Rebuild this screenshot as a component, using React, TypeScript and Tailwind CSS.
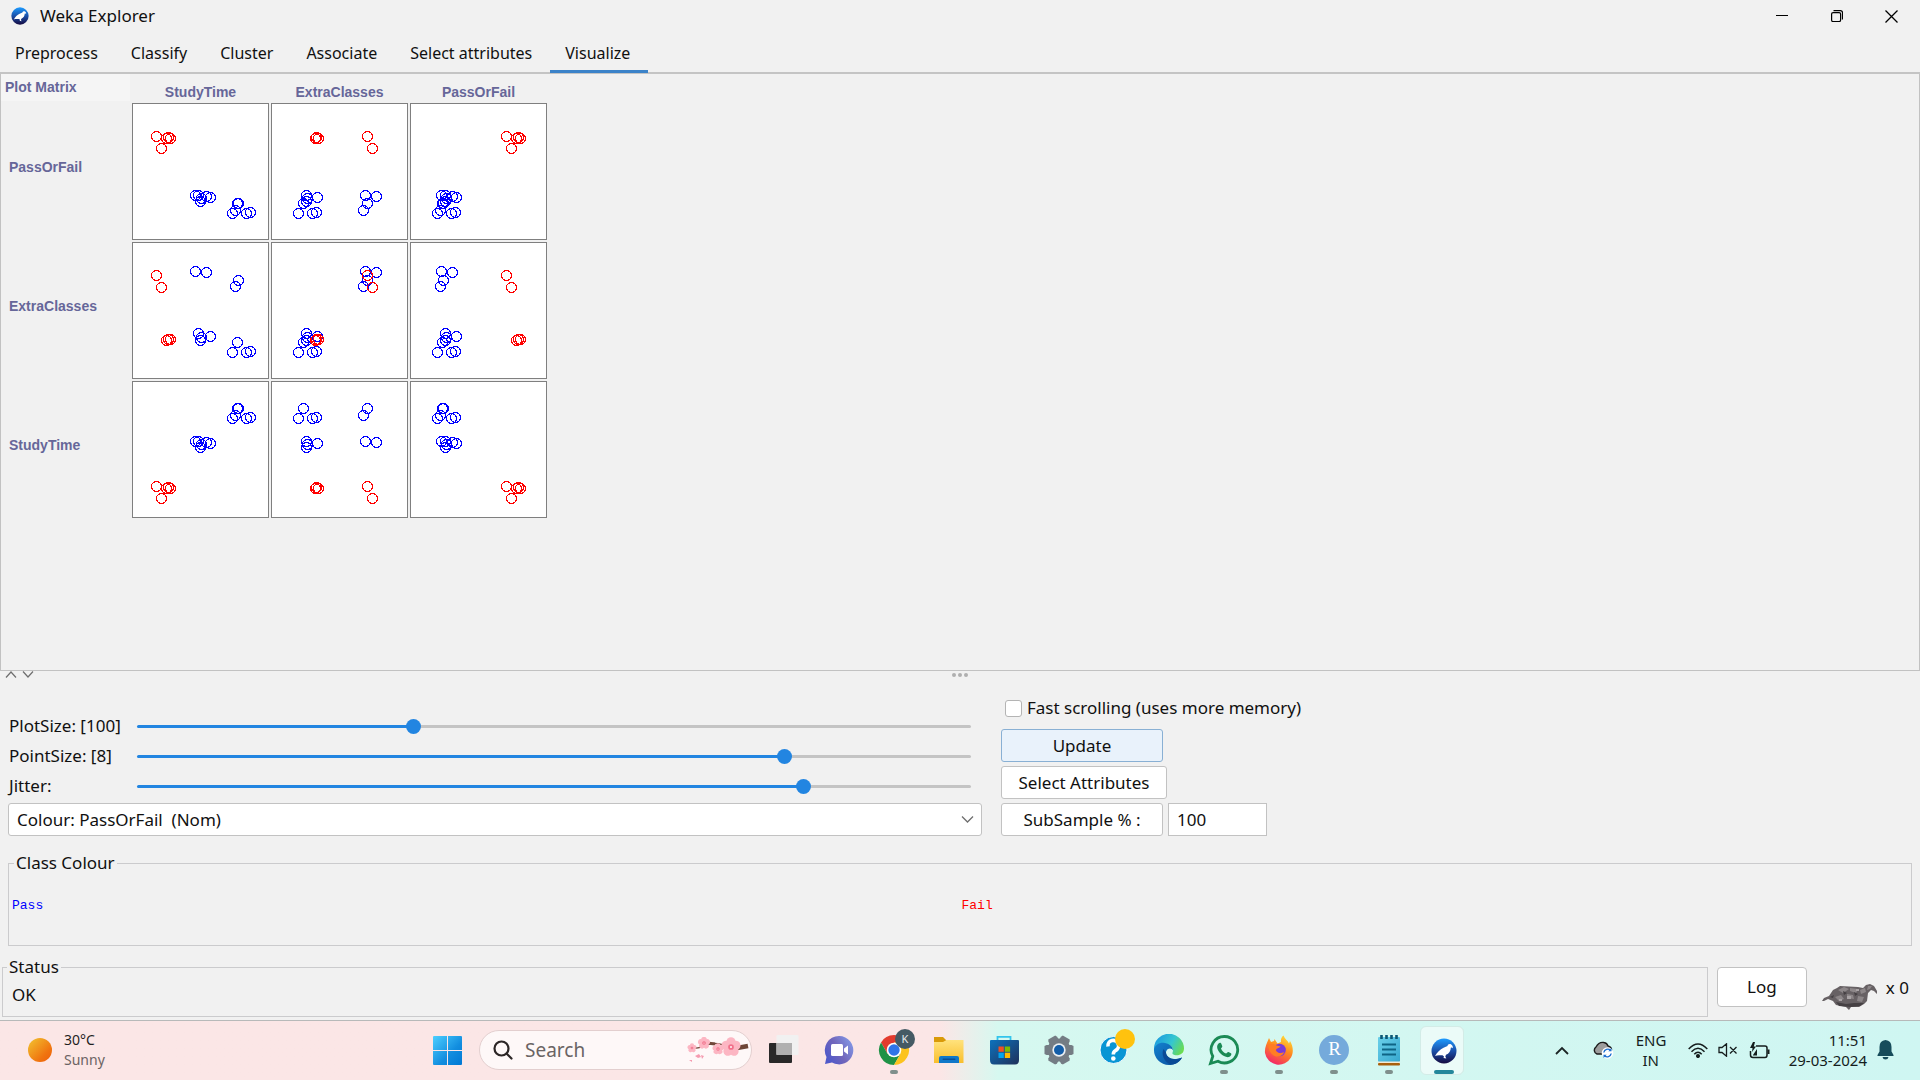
import React, { useId, useState } from "react";

type Point = { x: number[]; y: number[]; pass: boolean };

/* x: StudyTime, ExtraClasses, PassOrFail columns; y: PassOrFail, ExtraClasses, StudyTime rows */
const POINTS: Point[] = [
  { x: [63, 94, 31], y: [92, 29, 60], pass: true },
  { x: [66, 35, 35], y: [92, 91, 60], pass: true },
  { x: [69, 36, 36], y: [95, 95, 63], pass: true },
  { x: [68, 35, 35], y: [98, 98, 66], pass: true },
  { x: [74, 105, 42], y: [93, 30, 61], pass: true },
  { x: [78, 46, 46], y: [94, 94, 62], pass: true },
  { x: [105, 32, 32], y: [100, 100, 27], pass: true },
  { x: [106, 96, 33], y: [100, 38, 27], pass: true },
  { x: [103, 92, 30], y: [107, 44, 34], pass: true },
  { x: [100, 27, 27], y: [110, 110, 37], pass: true },
  { x: [114, 41, 41], y: [110, 110, 37], pass: true },
  { x: [118, 45, 45], y: [109, 109, 36], pass: true },
  { x: [24, 96, 96], y: [33, 33, 105], pass: false },
  { x: [29, 101, 101], y: [45, 45, 117], pass: false },
  { x: [34, 44, 106], y: [35, 98, 107], pass: false },
  { x: [36, 45, 108], y: [34, 97, 106], pass: false },
  { x: [38, 47, 110], y: [35, 97, 107], pass: false },
];

const COLUMNS = ["StudyTime", "ExtraClasses", "PassOrFail"];
const ROWS = ["PassOrFail", "ExtraClasses", "StudyTime"];
const TABS = ["Preprocess", "Classify", "Cluster", "Associate", "Select attributes", "Visualize"];

function WekaLogo({ size }: { size: number }) {
  const id = useId();
  return (
    <svg width={size} height={size} viewBox="0 0 26 26" aria-hidden="true">
      <defs>
        <linearGradient id={id} x1="0" y1="0" x2="0" y2="1">
          <stop offset="0" stopColor="#1c9bff" />
          <stop offset="0.5" stopColor="#1a4fa8" />
          <stop offset="1" stopColor="#150a40" />
        </linearGradient>
      </defs>
      <circle cx="13" cy="13" r="12.5" fill={`url(#${id})`} />
      <path
        d="M4 18C6 14.500 9 11.500 12.500 9.800L16.500 8C16.500 6.500 18.500 5.500 20.200 6.500C21.500 7.200 22 8.600 21.800 10.200C21 9.400 20.300 9.400 19.800 9.800C19.800 13 18 15.800 15 16.800L14.300 18.500L15.300 20.500L12.500 20L13 18.500L11.500 17.200C9 17.500 6.500 16.800 4 18Z"
        fill="#fff"
      />
    </svg>
  );
}

function Plot({ col, row }: { col: number; row: number }) {
  return (
    <button
      type="button"
      aria-label={`${ROWS[row]} against ${COLUMNS[col]}`}
      className="block h-[137px] w-[137px] border border-[#7f7f7f] bg-white"
    >
      <svg width="135" height="135" viewBox="1 1 135 135" shapeRendering="crispEdges" aria-hidden="true">
        {POINTS.map((p, i) => (
          <circle
            key={i}
            cx={p.x[col] + 0.5}
            cy={p.y[row] + 0.5}
            r="5"
            fill="none"
            stroke={p.pass ? "#0000ff" : "#ff0000"}
          />
        ))}
      </svg>
    </button>
  );
}

function PlotMatrix() {
  return (
    <section className="flex-1 border border-t-0 border-[#c2c2c2] text-sm leading-4 font-bold text-[#666699]" style={{ fontFamily: '"Liberation Sans", Arial, sans-serif' }}>
      <div className="grid w-max grid-cols-[129px_137px_137px_137px] gap-x-0.5">
        <h2 className="h-[27px] bg-[#f5f5f5] pt-[5px] pl-1">Plot Matrix</h2>
        {COLUMNS.map((c) => (
          <div key={c} className="pt-[10px] text-center">
            {c}
          </div>
        ))}
      </div>
      <div className="mt-0.5 grid w-max grid-cols-[129px_137px_137px_137px] gap-0.5">
        {ROWS.map((name, r) => (
          <React.Fragment key={name}>
            <div className="flex items-center pb-2.5 pl-2">{name}</div>
            {COLUMNS.map((c, i) => (
              <Plot key={c} col={i} row={r} />
            ))}
          </React.Fragment>
        ))}
      </div>
    </section>
  );
}

function Slider({ label, initial }: { label: string; initial: number }) {
  const id = useId();
  const [value, setValue] = useState(initial);
  const pct = value / 10;
  return (
    <div className="flex h-[30px] items-center pr-[11px] pl-px">
      <label htmlFor={id} className="w-[128px] shrink-0">
        {label}
      </label>
      <input
        id={id}
        type="range"
        min={0}
        max={1000}
        value={value}
        onChange={(e) => setValue(Number(e.target.value))}
        className="h-[3px] min-w-0 flex-1 appearance-none rounded-full [&::-webkit-slider-thumb]:h-[15px] [&::-webkit-slider-thumb]:w-[15px] [&::-webkit-slider-thumb]:appearance-none [&::-webkit-slider-thumb]:rounded-full [&::-webkit-slider-thumb]:bg-[#2285e1]"
        style={{ background: `linear-gradient(to right, #2285e1 ${pct}%, #c4c4c4 ${pct}%)` }}
      />
    </div>
  );
}

const BTN = "h-[33px] rounded-[3px] border border-[#c2c2c2] bg-white";

function Controls() {
  return (
    <section className="flex items-end pl-2">
      <div className="w-[974px]">
        <Slider label="PlotSize: [100]" initial={329} />
        <Slider label="PointSize: [8]" initial={782} />
        <Slider label="Jitter:" initial={805} />
        <div className="relative mt-0.5">
          <select aria-label="Colour" className="block h-[33px] w-full appearance-none rounded-[3px] border border-[#c2c2c2] bg-white pl-2">
            <option>Colour: PassOrFail&nbsp; (Nom)</option>
          </select>
          <svg className="pointer-events-none absolute top-3 right-2" width="13" height="9" viewBox="0 0 13 9" fill="none" stroke="#6e6e6e" strokeWidth="1.3">
            <path d="M1 1.500L6.500 7L12 1.500" />
          </svg>
        </div>
      </div>
      <div className="ml-[19px] flex flex-col items-start gap-1">
        <label className="mb-0.5 ml-1 flex h-[30px] items-center gap-[5px]">
          <input type="checkbox" className="h-[17px] w-[17px] appearance-none rounded-[3px] border border-[#b4b4b4] bg-white checked:bg-[#2285e1]" />
          Fast scrolling (uses more memory)
        </label>
        <button type="button" className="h-[33px] w-[162px] rounded-[3px] border border-[#89b0d4] bg-[#e9f2fb]">
          Update
        </button>
        <button type="button" className={`${BTN} w-[166px]`}>
          Select Attributes
        </button>
        <div className="flex gap-[5px]">
          <button type="button" className={`${BTN} w-[162px]`}>
            SubSample % :
          </button>
          <input aria-label="SubSample percentage" defaultValue="100" className="h-[33px] w-[99px] border border-[#c2c2c2] bg-white px-2" />
        </div>
      </div>
    </section>
  );
}

function RestingBird() {
  return (
    <svg width="56" height="26" viewBox="0 0 56 26" aria-hidden="true">
      <path d="M0 17L2 14L7 12L11 6L15 4L18 2L36 3L41 4L44 1L48 0L52 2L55 7L55 10L52 7L49 6L46 9L45 17L42 20L37 23L29 23L27 26L24 23L14 21L11 17L6 15L2 17Z" fill="#676164" />
      <path d="M16 6l6-3 5 2-6 4zM28 4l8 1-2 4-6-2zM38 6l5-2 1 4-5 2zM46 2l4 0-2 3-3 1z" fill="#8d8789" />
      <path d="M13 13l6-2 3 4-5 2zM25 10l6 1 1 4-7-1zM36 12l6 1-2 5-5-1z" fill="#8c8688" />
      <path d="M14 18l10 2 8-1 10 0-4 3-9 1-12-1zM21 7l4 2-3 2zM32 8l4 2-3 2zM8 13l4-2-1 3z" fill="#454043" />
      <path d="M25 12h4v3h-4zM34 5h3v2h-3zM17 15h3v2h-3z" fill="#a9a3a5" />
    </svg>
  );
}

function StatusRow() {
  return (
    <section className="mt-[11px] mb-[3px] flex items-start pl-0.5">
      <fieldset className="h-[60px] min-w-0 flex-1 border border-[#cbcbcd] pl-[9px]">
        <legend className="-ml-[5px] h-5 px-0.5 leading-5">Status</legend>
        <p className="pt-2 leading-5">OK</p>
      </fieldset>
      <button type="button" className="mt-[10px] ml-[9px] h-10 w-[90px] rounded-[4px] border border-[#c2c2c2] bg-white">
        Log
      </button>
      <div className="mt-[27px] ml-[15px]">
        <RestingBird />
      </div>
      <span className="mt-[21px] mr-[11px] ml-2 leading-5">x 0</span>
    </section>
  );
}

function Blossom({ x, y, r }: { x: number; y: number; r: number }) {
  return (
    <g transform={`translate(${x} ${y})`}>
      {[0, 72, 144, 216, 288].map((a) => (
        <circle key={a} cx="0" cy={-r * 0.55} r={r * 0.48} fill="#fcb6c3" transform={`rotate(${a})`} />
      ))}
      <circle r={r * 0.3} fill="#f2708a" />
      <circle r={r * 0.1} fill="#fff" />
    </g>
  );
}

const TaskIcons: { name: string; running?: boolean; art: React.ReactNode }[] = [
  {
    name: "Task view",
    art: (
      <svg width="30" height="30" viewBox="0 0 30 30">
        <rect x="0" y="8" width="23" height="20" rx="1" fill="#292929" />
        <rect x="7.500" y="0" width="22" height="20" rx="1" fill="#f1f1f1" />
        <path d="M7.500 8H23V20H7.500Z" fill="#b0b0b0" />
      </svg>
    ),
  },
  {
    name: "Chat",
    art: (
      <svg width="30" height="30" viewBox="0 0 30 30">
        <defs>
          <linearGradient id="chat" x1="0" y1="0.6" x2="1" y2="0">
            <stop offset="0" stopColor="#5059c9" />
            <stop offset="0.4" stopColor="#7166bb" />
            <stop offset="1" stopColor="#86a3f0" />
          </linearGradient>
        </defs>
        <path d="M15 1A14.200 14.200 0 1 1 8 27.500L1 29L2.500 22A14.200 14.200 0 0 1 15 1Z" fill="url(#chat)" />
        <rect x="7" y="9" width="12" height="12" rx="1.500" fill="#fff" />
        <path d="M20 13.500L24 10.500V19.500L20 16.500Z" fill="#fff" />
      </svg>
    ),
  },
  {
    name: "Chrome",
    running: true,
    art: (
      <svg className="overflow-visible" width="30" height="30" viewBox="0 0 30 30">
        <path d="M15 15L2 7.500A15 15 0 0 1 28 7.500L15 7.500Z" fill="#e33b2e" />
        <path d="M2 7.500L8.500 18.700L15 15L15 7.500Z" fill="#e33b2e" />
        <path d="M2 7.500A15 15 0 0 0 15 30L21.500 18.700H8.500Z" fill="#1f9246" />
        <path d="M28 7.500H15V15L21.500 18.700L15 30A15 15 0 0 0 28 7.500Z" fill="#fcc31e" />
        <circle cx="15" cy="15" r="7.300" fill="#fff" />
        <circle cx="15" cy="15" r="5.700" fill="#2f74e8" />
        <circle cx="26" cy="4" r="10" fill="#455a64" />
        <text x="26" y="8" fontSize="11" fill="#e8edef" textAnchor="middle" fontFamily="Noto Sans">
          K
        </text>
      </svg>
    ),
  },
  {
    name: "File Explorer",
    art: (
      <svg width="31" height="28" viewBox="0 0 31 28">
        <defs>
          <linearGradient id="folder" x1="0" y1="0" x2="0" y2="1">
            <stop offset="0" stopColor="#ffe27c" />
            <stop offset="1" stopColor="#f9bf2d" />
          </linearGradient>
        </defs>
        <path d="M1 1H10L13.500 4.500V9H1Z" fill="#d99a08" />
        <path d="M1 6H10L13.500 4H30.500V27H1Z" fill="url(#folder)" />
        <path d="M6 27V22A2 2 0 0 1 8 20H24A2 2 0 0 1 26 22V27Z" fill="#0f78c9" />
        <rect x="9.500" y="22.500" width="13" height="1.500" rx="0.700" fill="#0a4f96" />
      </svg>
    ),
  },
  {
    name: "Microsoft Store",
    art: (
      <svg width="30" height="30" viewBox="0 0 30 30">
        <defs>
          <linearGradient id="store" x1="0" y1="0" x2="1" y2="1">
            <stop offset="0" stopColor="#0c72bd" />
            <stop offset="1" stopColor="#20305a" />
          </linearGradient>
        </defs>
        <path d="M8.500 6V1.800H21.500V6" fill="none" stroke="#34c4ec" strokeWidth="1.800" />
        <path d="M1 6Q1 5 2 5H29Q30 5 30 6V25Q30 29.500 26 29.500H5Q1 29.500 1 25Z" fill="url(#store)" />
        <rect x="9.500" y="11.500" width="5.300" height="5.300" fill="#f25022" />
        <rect x="15.800" y="11.500" width="5.300" height="5.300" fill="#7fba00" />
        <rect x="9.500" y="17.700" width="5.300" height="5.300" fill="#00a4ef" />
        <rect x="15.800" y="17.700" width="5.300" height="5.300" fill="#ffb900" />
      </svg>
    ),
  },
  {
    name: "Settings",
    art: (
      <svg width="30" height="30" viewBox="-15 -15 30 30">
        <g fill="#747c84">
          <circle r="11.500" />
          {[0, 60, 120].map((a) => (
            <path key={a} d="M-12.500 -5L-14.500 -4V4L-12.500 5H12.500L14.500 4V-4L12.500 -5Z" transform={`rotate(${a})`} />
          ))}
        </g>
        <circle r="6.700" fill="#e9eef2" />
        <circle r="5" fill="#135da8" />
      </svg>
    ),
  },
  {
    name: "Get Help",
    art: (
      <svg className="overflow-visible" width="30" height="30" viewBox="0 0 30 30">
        <circle cx="14.500" cy="15" r="13.500" fill="#0995d4" stroke="#f7fdff" />
        <path d="M9 11.500A5.300 5.300 0 1 1 16.500 15.500Q14.300 16.700 14.300 19.500" fill="none" stroke="#fff" strokeWidth="3.600" />
        <circle cx="14.300" cy="23.500" r="2.300" fill="#fff" />
        <circle cx="26" cy="4" r="10" fill="#ffc20e" />
      </svg>
    ),
  },
  {
    name: "Microsoft Edge",
    art: (
      <svg width="32" height="32" viewBox="0 0 32 32">
        <defs>
          <linearGradient id="edgeTop" x1="0" y1="0.300" x2="1" y2="0.700">
            <stop offset="0" stopColor="#1b9be0" />
            <stop offset="0.550" stopColor="#35c6d0" />
            <stop offset="1" stopColor="#6ddd4c" />
          </linearGradient>
          <linearGradient id="edgeLow" x1="0" y1="0" x2="1" y2="1">
            <stop offset="0" stopColor="#1382cf" />
            <stop offset="1" stopColor="#0b4e9c" />
          </linearGradient>
        </defs>
        <path d="M1 15A15 15 0 0 1 31 14.500C31 20 26 22 21.500 21C18.500 20.300 19.500 19 20 17C20.500 12 15 9.500 10.500 10C6 10.500 2.500 13 1 17Z" fill="url(#edgeTop)" />
        <path d="M1 15C3 9.500 8 7.800 12 9C17 10 20 13 20 16.500C19 13.500 14 13.500 13 18C12.500 23 18 27.500 29 23.500C26 29 21 31 16 31A15 15 0 0 1 1 15Z" fill="url(#edgeLow)" />
        <path d="M10.500 15C8 20 11 28 17.500 30.500C22 31 27 28 29 23.500C21 27.500 13.500 24 13 18.500Z" fill="#0a4a96" />
      </svg>
    ),
  },
  {
    name: "WhatsApp",
    running: true,
    art: (
      <svg width="32" height="32" viewBox="0 0 32 32">
        <path d="M16.500 2.500A13.200 13.200 0 1 1 10 27.200L2.500 29.500L4.800 22.200A13.200 13.200 0 0 1 16.500 2.500Z" fill="none" stroke="#1b8a55" strokeWidth="2.800" />
        <path d="M10.500 9.500C12 8.200 13 8.800 13.500 10.200L14.300 12.200C14.500 13 13.300 13.800 13 14.500C14 17 15.500 18.500 18 19.500C19 19 19.500 17.500 20.500 18L23 19.200C24 20 23 22 21.500 22.800C19 24 15 22 12.500 19.500C10 17 7.500 12.500 10.500 9.500Z" fill="#1b8a55" />
      </svg>
    ),
  },
  {
    name: "Firefox",
    running: true,
    art: (
      <svg width="30" height="30" viewBox="0 0 30 30">
        <defs>
          <linearGradient id="fox" x1="0.800" y1="0" x2="0.300" y2="1">
            <stop offset="0" stopColor="#ffe03a" />
            <stop offset="0.450" stopColor="#ff8a1f" />
            <stop offset="1" stopColor="#f3246b" />
          </linearGradient>
        </defs>
        <path d="M5 3L7 7L10 6L10.500 4L13.500 8.500L17 7C16.500 4 18 1.500 19.500 0.500C20.500 4 24 5.500 25 8.500L26 6C29 11 30 17 27 22.500A14 14 0 0 1 1 18C0.500 13 2.500 9 5 3Z" fill="url(#fox)" />
        <circle cx="15.500" cy="15" r="6.300" fill="#7a3bd8" />
        <path d="M4 10C8 8.500 11 9 12.500 10.500L16.500 11.500C15 13.500 12 13 12 15.500C13 18 17 19 20 17C19 21.500 13 23 9 20C5.500 17.500 4.500 13 4 10Z" fill="#ff7d24" />
      </svg>
    ),
  },
  {
    name: "RStudio",
    running: true,
    art: (
      <svg width="30" height="30" viewBox="0 0 30 30">
        <circle cx="15" cy="15" r="15" fill="#75aadb" />
        <text x="15.500" y="20" fontSize="19" fill="#fff" textAnchor="middle" fontFamily="Liberation Serif">
          R
        </text>
      </svg>
    ),
  },
  {
    name: "Notepad",
    running: true,
    art: (
      <svg width="24" height="32" viewBox="0 0 24 32">
        <defs>
          <linearGradient id="note" x1="0" y1="0" x2="1" y2="1">
            <stop offset="0" stopColor="#6bd0ea" />
            <stop offset="1" stopColor="#36a7cf" />
          </linearGradient>
        </defs>
        <rect x="1" y="3" width="22" height="25" rx="1" fill="url(#note)" />
        <rect x="1" y="27.500" width="22" height="1.500" fill="#f0ead6" />
        <rect x="1" y="29" width="22" height="2.500" rx="1" fill="#a9600c" />
        <path d="M5 10.500H19M5 15.500H19M5 20.500H19" stroke="#0f6485" strokeWidth="1.800" />
        <path d="M4.500 1V5M9.500 1V5M14.500 1V5M19.500 1V5" stroke="#0c5674" strokeWidth="2.600" />
      </svg>
    ),
  },
];

function Taskbar() {
  return (
    <footer
      className="flex h-[60px] items-center border-t border-[#b7b9b9] bg-linear-to-r from-[#fbe6e6] from-49% via-[#d6f8f0] via-52% to-[#cff6f2] pb-px"
      style={{ fontFamily: '"Noto Sans", "Open Sans", sans-serif' }}
    >
      <button type="button" className="flex w-[431px] items-center text-left text-sm leading-5 text-[#1f1f1f]">
        <svg className="mr-3 ml-7" width="24" height="24" viewBox="0 0 24 24" aria-hidden="true">
          <defs>
            <linearGradient id="sun" x1="0" y1="0" x2="1" y2="1">
              <stop offset="0" stopColor="#f2c531" />
              <stop offset="0.700" stopColor="#f0730f" />
              <stop offset="1" stopColor="#ee5f0b" />
            </linearGradient>
          </defs>
          <circle cx="12" cy="12" r="12" fill="url(#sun)" />
        </svg>
        <span className="block">
          <span className="block">30°C</span>
          <span className="block text-[#6b6363]">Sunny</span>
        </span>
      </button>

      <button type="button" aria-label="Start" className="mr-[17px] ml-0.5">
        <svg width="29" height="29" viewBox="0 0 29 29">
          <defs>
            <linearGradient id="win" x1="0" y1="0" x2="1" y2="1" gradientUnits="objectBoundingBox">
              <stop offset="0" stopColor="#4ccfff" />
              <stop offset="0.600" stopColor="#128ddf" />
              <stop offset="1" stopColor="#0078d4" />
            </linearGradient>
          </defs>
          <path d="M1 0H14V14H0V1Q0 0 1 0ZM15 0H28Q29 0 29 1V14H15ZM0 15H14V29H1Q0 29 0 28ZM15 15H29V28Q29 29 28 29H15Z" fill="url(#win)" />
        </svg>
      </button>

      <label className="flex h-10 w-[273px] items-center rounded-full border border-[#e3cfcf] bg-[#fef8f8] pr-0.5 pl-[13px]">
        <svg width="20" height="20" viewBox="0 0 20 20" fill="none" stroke="#2c2626" strokeWidth="2.200" strokeLinecap="round" aria-hidden="true">
          <circle cx="8.500" cy="8.500" r="7" />
          <path d="M13.500 13.500L18.500 18.500" />
        </svg>
        <input type="text" aria-label="Search" placeholder="Search" className="ml-3 w-0 min-w-0 flex-1 bg-transparent text-[19px] leading-6 outline-none placeholder:text-[#6a6464]" />
        <svg width="62" height="26" viewBox="0 0 62 26" aria-hidden="true">
          <path d="M4 11Q14 12 20 7Q34 5 42 11" fill="none" stroke="#70473a" strokeWidth="1.600" />
          <path d="M20 6L28 7" stroke="#70473a" strokeWidth="3" />
          <path d="M50 11L61 9" stroke="#6d4637" strokeWidth="4.500" />
          <Blossom x={5} y={11} r={4.5} />
          <Blossom x={17} y={6} r={6} />
          <Blossom x={31} y={12} r={5.5} />
          <Blossom x={44} y={10} r={9.5} />
          <path d="M8 19l4-2 2 3-3 1zM14 18l3 1-2 3zM2 23l3 0 0 2z" fill="#f59bb0" />
        </svg>
      </label>

      <nav aria-label="Taskbar" className="ml-1 flex h-full">
        {TaskIcons.map((t) => (
          <button key={t.name} type="button" aria-label={t.name} className="relative flex h-full w-[55px] items-center justify-center">
            {t.art}
            {t.running && <span className="absolute bottom-[5px] left-6 h-1 w-2 rounded-full bg-[#7f8f8c]" />}
          </button>
        ))}
        <button type="button" aria-label="Weka" className="relative flex h-full w-[55px] items-center justify-center">
          <span className="absolute top-[5px] left-3 h-[49px] w-9 rounded-md border border-[#d3ece7] bg-[#e6f9f5]" />
          <span className="absolute top-[5px] left-1 flex h-[49px] w-[44px] items-center justify-center rounded-md border border-[#d3ece7] bg-[#ebfbf8] pl-1">
            <WekaLogo size={26} />
          </span>
          <span className="absolute bottom-[5px] left-[18px] h-1 w-5 rounded-full bg-[#24879b]" />
        </button>
      </nav>

      <div className="ml-auto flex items-center text-[15px] text-[#151d1d]">
        <button type="button" aria-label="Show hidden icons" className="mr-[23px]">
          <svg width="14" height="9" viewBox="0 0 14 9" fill="none" stroke="#1b2424" strokeWidth="1.800">
            <path d="M1 8L7 2L13 8" />
          </svg>
        </button>
        <svg className="mr-[22px]" width="22" height="18" viewBox="0 0 22 18" aria-label="OneDrive syncing">
          <path d="M5 13A4 4 0 0 1 4 6Q7 0.500 12 1.500Q15 2 16 5Q20 6 19.500 10Q19 13 16 13Z" fill="#9d9d9d" stroke="#1c1c1c" strokeWidth="1.400" />
          <circle cx="15.500" cy="12" r="5.800" fill="#fff" />
          <path d="M11.800 11.500A4 4 0 0 1 18.500 9.300M19.200 12.500A4 4 0 0 1 12.500 14.700" fill="none" stroke="#1b6fd0" strokeWidth="1.400" />
          <path d="M19.500 7V10.300H16.300ZM11.500 17V13.700H14.700Z" fill="#1b6fd0" />
        </svg>
        <div className="mr-[22px] w-[30px] text-center leading-5">
          ENG
          <br />
          IN
        </div>
        <svg className="mr-[10px]" width="20" height="15" viewBox="0 0 20 15" fill="none" stroke="#151d1d" strokeWidth="1.500" aria-label="Wi-Fi">
          <path d="M0.700 6Q10 -4 19.300 6M3.500 8.700Q10 1.800 16.500 8.700M6.300 11.300Q10 7.300 13.700 11.300" />
          <circle cx="10" cy="13" r="1.300" fill="#151d1d" />
        </svg>
        <svg className="mr-[11px]" width="20" height="14" viewBox="0 0 20 14" fill="none" stroke="#151d1d" strokeWidth="1.300" aria-label="Muted">
          <path d="M1 4.500H4L8.500 0.800V13.200L4 9.500H1ZM12 4L18.500 10.500M18.500 4L12 10.500" />
        </svg>
        <svg className="mr-[19px]" width="21" height="17" viewBox="0 0 21 17" fill="none" stroke="#151d1d" strokeWidth="1.500" aria-label="Battery charging">
          <path d="M7 4H16Q18 4 18 6V13Q18 15.500 16 15.500H4Q1.500 15.500 1.500 13V9" />
          <path d="M4 0L1 6H3.500L3 10L7 4.500H4.800L6 0ZM4 13L8 7V13.500H4ZM18.500 7.500H20.500V12H18.500Z" fill="#151d1d" stroke="none" />
        </svg>
        <div className="mr-[10px] text-right leading-5">
          11:51
          <br />
          29-03-2024
        </div>
        <button type="button" aria-label="Notifications" className="mr-[26px]">
          <svg width="17" height="20" viewBox="0 0 17 20" fill="#174c5b">
            <path d="M8.500 0Q14.500 0.500 14.500 7V11.500L16.500 15V16H0.500V15L2.500 11.500V7Q2.500 0.500 8.500 0ZM5.500 17H11.500Q11 19.500 8.500 19.500Q6 19.500 5.500 17Z" />
          </svg>
        </button>
      </div>
    </footer>
  );
}

export default function App() {
  const [tab, setTab] = useState("Visualize");
  return (
    <div className="flex min-h-screen flex-col bg-[#f1f1f1] text-[17px] leading-6 text-[#101010]" style={{ fontFamily: '"Noto Sans", "Open Sans", sans-serif' }}>
      <header className="flex h-8 items-center pl-[11px]">
        <WekaLogo size={18} />
        <h1 className="ml-[11px]">Weka Explorer</h1>
        <div className="ml-auto flex items-center pr-px">
          <button type="button" aria-label="Minimize" className="flex h-8 w-[55px] items-center justify-center">
            <svg width="12" height="12" viewBox="0 0 12 12" stroke="#000" shapeRendering="crispEdges">
              <path d="M0 5.500H12" />
            </svg>
          </button>
          <button type="button" aria-label="Restore" className="flex h-8 w-[55px] items-center justify-center">
            <svg width="12" height="12" viewBox="0 0 12 12" fill="none" stroke="#000" strokeWidth="1.200">
              <rect x="0.600" y="2.600" width="9" height="9" rx="1.500" />
              <path d="M2.500 0.600H9.500Q11.500 0.600 11.500 2.800V9.500" />
            </svg>
          </button>
          <button type="button" aria-label="Close" className="flex h-8 w-[55px] items-center justify-center">
            <svg width="13" height="13" viewBox="0 0 13 13" stroke="#000" strokeWidth="1.300">
              <path d="M0.500 0.500L12.500 12.500M12.500 0.500L0.500 12.500" />
            </svg>
          </button>
        </div>
      </header>

      <div role="tablist" className="flex h-[42px] border-b-2 border-[#c4c4c4] text-base">
        {TABS.map((t) => (
          <button
            key={t}
            type="button"
            role="tab"
            aria-selected={t === tab}
            onClick={() => setTab(t)}
            className={t === tab ? "h-[41px] border-b-[3px] border-[#3c83c9] pt-1 pr-[18px] pl-[15px]" : "h-[41px] border-b-[3px] border-transparent pt-1 pr-[18px] pl-[15px]"}
          >
            {t}
          </button>
        ))}
      </div>

      <PlotMatrix />

      <div className="flex h-[22px] items-start justify-between">
        <div className="flex w-24 gap-[5px] pl-[5px]">
          <button type="button" aria-label="Collapse up">
            <svg className="block" width="12" height="7" viewBox="0 0 12 7" fill="none" stroke="#6e6e6e" strokeWidth="1.200">
              <path d="M1 6.500L6 1L11 6.500" />
            </svg>
          </button>
          <button type="button" aria-label="Collapse down">
            <svg className="block" width="12" height="7" viewBox="0 0 12 7" fill="none" stroke="#6e6e6e" strokeWidth="1.200">
              <path d="M1 0.500L6 6L11 0.500" />
            </svg>
          </button>
        </div>
        <div className="flex gap-0.5 pt-0.5">
          <i className="h-1 w-1 rounded-full bg-[#afafaf]" />
          <i className="h-1 w-1 rounded-full bg-[#afafaf]" />
          <i className="h-1 w-1 rounded-full bg-[#afafaf]" />
        </div>
        <div className="w-24" />
      </div>

      <Controls />

      <fieldset className="mx-2 mt-[17px] h-[93px] border border-[#cbcbcd]">
        <legend className="ml-[5px] h-5 px-0.5 leading-5">Class Colour</legend>
        <div className="grid grid-cols-2 pt-[25px] pl-[3px] text-[13px] leading-4" style={{ fontFamily: '"Liberation Mono", "Courier New", monospace' }}>
          <button type="button" className="text-left text-[#0000ff]">
            Pass
          </button>
          <button type="button" className="text-left text-[#ff0000]">
            Fail
          </button>
        </div>
      </fieldset>

      <StatusRow />
      <Taskbar />
    </div>
  );
}
